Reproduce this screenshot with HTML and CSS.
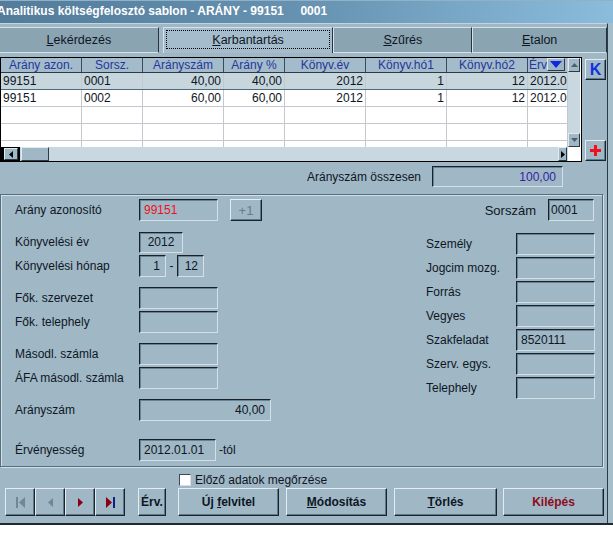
FILE: index.html
```html
<!DOCTYPE html>
<html lang="hu">
<head>
<meta charset="utf-8">
<title>Analitikus költségfelosztó sablon</title>
<link rel="stylesheet" href="styles.css">
</head>
<body>
<div class="window">
  <div class="titlebar">Analitikus költségfelosztó sablon - ARÁNY - 99151     0001</div>
  <div class="content">
    <div class="tabs">
      <div class="tab t1"><span><u>L</u>ekérdezés</span></div>
      <div class="tab t2 active"><span class="focus"><u>K</u>arbantartás</span></div>
      <div class="tab t3"><span><u>S</u>zűrés</span></div>
      <div class="tab t4"><span><u>E</u>talon</span></div>
    </div>

    <div class="gridzone">
      <div class="grid">
        <div class="gbody">
          <div class="gtable">
            <div class="grow ghead">
              <div>Arány azon.</div><div>Sorsz.</div><div>Arányszám</div><div>Arány %</div><div>Könyv.év</div><div>Könyv.hó1</div><div>Könyv.hó2</div>
              <div class="erv"><span>Érv</span><span class="dd"><svg width="12" height="7" viewBox="0 0 12 7"><path d="M0 0H12L6 7Z" fill="#1028e0"/></svg></span></div>
            </div>
            <div class="grow sel">
              <div>99151</div><div>0001</div><div class="r">40,00</div><div class="r">40,00</div><div class="r">2012</div><div class="r">1</div><div class="r">12</div><div>2012.01.01</div>
            </div>
            <div class="grow">
              <div>99151</div><div>0002</div><div class="r">60,00</div><div class="r">60,00</div><div class="r">2012</div><div class="r">1</div><div class="r">12</div><div>2012.01.01</div>
            </div>
            <div class="grow"><div></div><div></div><div></div><div></div><div></div><div></div><div></div><div></div></div>
            <div class="grow"><div></div><div></div><div></div><div></div><div></div><div></div><div></div><div></div></div>
            <div class="grow"><div></div><div></div><div></div><div></div><div></div><div></div><div></div><div></div></div>
          </div>
          <div class="vscroll">
            <div class="sbtn"><svg width="7" height="4" viewBox="0 0 7 4"><path d="M0 4H7L3.5 0Z" fill="#4a6070"/></svg></div>
            <div class="strack"></div>
            <div class="sbtn"><svg width="7" height="4" viewBox="0 0 7 4"><path d="M0 0H7L3.5 4Z" fill="#4a6070"/></svg></div>
          </div>
        </div>
        <div class="hscroll">
          <div class="hleft"><div class="sbtn hb"><svg width="4" height="7" viewBox="0 0 4 7"><path d="M4 0V7L0 3.5Z" fill="#000"/></svg></div></div>
          <div class="sbtn thumb"></div>
          <div class="htrack"></div>
          <div class="sbtn hright"><svg width="4" height="7" viewBox="0 0 4 7"><path d="M0 0V7L4 3.5Z" fill="#000"/></svg></div>
          <div class="corner"></div>
        </div>
      </div>
      <div class="sidebtns">
        <div class="btn sq k">K</div>
        <div class="btn sq"><svg width="11" height="11" viewBox="0 0 11 11"><path d="M4 0H7V4H11V7H7V11H4V7H0V4H4Z" fill="#f01020"/></svg></div>
      </div>
    </div>

    <div class="totalrow">
      <span class="tlabel">Arányszám összesen</span>
      <div class="fld total">100,00</div>
    </div>

    <div class="panel">
      <div class="lcol">
        <div class="frow">
          <span class="lbl">Arány azonosító</span>
          <div class="fld w79 red">99151</div>
          <div class="btn plus1">+1</div>
        </div>
        <div class="frow grp">
          <span class="lbl">Könyvelési év</span>
          <div class="fld w44 c">2012</div>
        </div>
        <div class="frow pair">
          <span class="lbl">Könyvelési hónap</span>
          <div class="fld w27 r">1</div>
          <span class="dash">-</span>
          <div class="fld w27 r">12</div>
        </div>
        <div class="frow grp">
          <span class="lbl">Fők. szervezet</span>
          <div class="fld w79"></div>
        </div>
        <div class="frow pair">
          <span class="lbl">Fők. telephely</span>
          <div class="fld w79"></div>
        </div>
        <div class="frow grp">
          <span class="lbl">Másodl. számla</span>
          <div class="fld w79"></div>
        </div>
        <div class="frow pair">
          <span class="lbl">ÁFA másodl. számla</span>
          <div class="fld w79"></div>
        </div>
        <div class="frow grp">
          <span class="lbl">Arányszám</span>
          <div class="fld w132 r">40,00</div>
        </div>
        <div class="frow grp2">
          <span class="lbl">Érvényesség</span>
          <div class="fld w77 clip">2012.01.01</div>
          <span class="suffix">-tól</span>
        </div>
      </div>
      <div class="rcol">
        <div class="frow sorsz">
          <span class="lbl13">Sorszám</span>
          <div class="fld w46">0001</div>
        </div>
        <div class="rlist">
          <div class="frow"><span class="rlbl">Személy</span><div class="fld w79"></div></div>
          <div class="frow"><span class="rlbl">Jogcim mozg.</span><div class="fld w79"></div></div>
          <div class="frow"><span class="rlbl">Forrás</span><div class="fld w79"></div></div>
          <div class="frow"><span class="rlbl">Vegyes</span><div class="fld w79"></div></div>
          <div class="frow"><span class="rlbl">Szakfeladat</span><div class="fld w79">8520111</div></div>
          <div class="frow"><span class="rlbl">Szerv. egys.</span><div class="fld w79"></div></div>
          <div class="frow"><span class="rlbl">Telephely</span><div class="fld w79"></div></div>
        </div>
      </div>
    </div>

    <div class="footer">
      <div class="checkrow"><span class="cbox"></span><span>Előző adatok megőrzése</span></div>
      <div class="btnrow">
        <div class="nav">
          <div class="btn nb"><svg width="9" height="11" viewBox="0 0 9 11"><rect x="0" y="0" width="2" height="11" fill="#6e8898"/><path d="M9 0V11L3 5.5Z" fill="#6e8898"/></svg></div>
          <div class="btn nb"><svg width="5" height="9" viewBox="0 0 5 9"><path d="M5 0V9L0 4.5Z" fill="#6e8898"/></svg></div>
          <div class="btn nb"><svg width="5" height="9" viewBox="0 0 5 9"><path d="M0 0V9L5 4.5Z" fill="#8a0010"/></svg></div>
          <div class="btn nb"><svg width="9" height="11" viewBox="0 0 9 11"><path d="M0 0V11L6 5.5Z" fill="#8a0010"/><rect x="7" y="0" width="2" height="11" fill="#102080"/></svg></div>
        </div>
        <div class="btn bb erv-btn">Érv.</div>
        <div class="btn bb wide"><span>Új <u>f</u>elvitel</span></div>
        <div class="btn bb wide"><span><u>M</u>ódosítás</span></div>
        <div class="btn bb wide w102"><span><u>T</u>örlés</span></div>
        <div class="btn bb wide exit">Kilépés</div>
      </div>
    </div>
  </div>
</div>
</body>
</html>
```

FILE: styles.css
```css
* { box-sizing: border-box; margin: 0; padding: 0; }
html, body { background: #ffffff; }
body {
  width: 613px;
  height: 535px;
  overflow: hidden;
  font-family: "Liberation Sans", Arial, sans-serif;
  font-size: 12px;
  color: #0e1624;
}
u { text-decoration: underline; text-underline-offset: 1px; }

.window {
  width: 613px;
  height: 525px;
  background: #a6bdca;
  border-bottom: 2px solid #1c2832;
  display: flex;
  flex-direction: column;
}

.titlebar {
  height: 23px;
  flex: none;
  background: linear-gradient(to right, #537c9b 0%, #6792b1 50%, #8bbcdc 100%);
  border-top: 1px solid #8fb2c8;
  color: #ffffff;
  font-weight: bold;
  font-size: 12px;
  line-height: 21px;
  white-space: pre;
  text-indent: -3px;
  overflow: hidden;
}

.content {
  width: 608px;
  flex: 1;
  background: #a0b8c6;
  border-right: 1px solid #2a3a46;
  border-top: 1px solid #c2d4de;
  padding-top: 3px;
  display: flex;
  flex-direction: column;
}

/* tabs */
.tabs {
  display: flex;
  height: 26px;
  flex: none;
}
.tab {
  height: 26px;
  background: #8ba4b2;
  border-top: 1px solid #d6e2e9;
  border-left: 1px solid #d6e2e9;
  border-right: 1px solid #25343f;
  border-bottom: 1px solid #d6e2e9;
  display: flex;
  align-items: center;
  justify-content: center;
  font-size: 12.5px;
}
.t1 { width: 159px; border-left: none; margin-right: 4px; }
.t2 { width: 171px; }
.t3 { width: 139px; }
.t4 { width: 135px; border-right: 1px solid #25343f; }
.tab.active {
  background: #a4bccb;
  border-bottom: none;
  padding: 2px 2px 4px 2px;
}
.focus {
  flex: 1;
  align-self: stretch;
  border: 1px dotted #000;
  display: flex;
  align-items: center;
  justify-content: center;
}

/* grid */
.gridzone {
  display: flex;
  margin-top: 4px;
  flex: none;
}
.grid {
  width: 582px;
  height: 105px;
  border: 1px solid #000;
  display: flex;
  flex-direction: column;
  background: #ffffff;
}
.gbody {
  display: flex;
  height: 89px;
}
.gtable {
  width: 566px;
  overflow: hidden;
  background: #ffffff;
}
.grow {
  display: grid;
  grid-template-columns: 81px 61px 81px 61px 81px 81px 81px 39px;
  height: 17px;
  border-bottom: 1px solid #c4c8cc;
}
.grow > div {
  border-right: 1px solid #c4c8cc;
  padding: 0 2px;
  line-height: 16px;
  white-space: nowrap;
  overflow: hidden;
}
.grow > div.r { text-align: right; }
.grow > div:last-child { border-right: none; }
.ghead {
  height: 15px;
  background: #a3bbca;
  border-bottom: 1px solid #2a3a46;
}
.ghead > div {
  color: #26369c;
  text-align: center;
  line-height: 14px;
  border-right: 1px solid #3a4c58;
}
.ghead > div.erv {
  display: flex;
  text-align: left;
  padding: 0 0 0 1px;
  overflow: hidden;
}
.dd {
  width: 18px;
  height: 13px;
  margin-left: 0px;
  flex: none;
  background: #9db5c4;
  border: 1px solid;
  border-color: #dce6ec #2a3a46 #2a3a46 #dce6ec;
  display: flex;
  align-items: center;
  justify-content: center;
}
.grow.sel {
  background: #c7d5dd;
  border-bottom: 1px solid #4c6a7e;
}

.vscroll {
  width: 13px;
  display: flex;
  flex-direction: column;
  background: #c9d8e0;
  border-left: 1px solid #c4c8cc;
}
.sbtn {
  background: #a0b8c6;
  border: 1px solid;
  border-color: #e0eaf0 #2a3a46 #2a3a46 #e0eaf0;
  display: flex;
  align-items: center;
  justify-content: center;
}
.vscroll .sbtn { height: 14px; }
.strack { flex: 1; }

.hscroll {
  height: 14px;
  display: flex;
  background: #c9d8e0;
}
.hleft {
  width: 19px;
  background: #000;
  padding: 1px 2px 1px 3px;
  display: flex;
}
.hb { flex: 1; }
.thumb { width: 28px; margin-left: 1px; }
.htrack { flex: 1; }
.hright { width: 9px; margin-right: 1px; }
.corner { width: 13px; background: #ffffff; }

.sidebtns {
  width: 21px;
  margin-left: 3px;
  padding: 2px 0 1px;
  display: flex;
  flex-direction: column;
  justify-content: space-between;
}

.btn {
  background: #a0b8c6;
  border: 1px solid;
  border-color: #e2ecf2 #18242e #18242e #e2ecf2;
  box-shadow: inset -1px -1px 0 #5f7887;
  display: flex;
  align-items: center;
  justify-content: center;
}
.sq { width: 21px; height: 21px; }
.k {
  color: #1030e0;
  font-weight: bold;
  font-size: 16px;
}

/* total */
.totalrow {
  display: flex;
  align-items: center;
  justify-content: flex-end;
  margin-top: 4px;
  padding-right: 44px;
  flex: none;
}
.tlabel { margin-right: 11px; }
.fld {
  height: 22px;
  border: 1px solid;
  border-color: #17222b #d4e0e8 #d4e0e8 #17222b;
  box-shadow: inset 1px 1px 0 #6a8392;
  padding: 0 4px;
  display: flex;
  align-items: center;
  white-space: nowrap;
  overflow: hidden;
  flex: none;
}
.fld.total {
  width: 131px;
  height: 21px;
  justify-content: flex-end;
  padding-right: 6px;
  color: #3424a4;
}

/* panel */
.panel {
  margin-top: 7px;
  width: 603px;
  height: 273px;
  border: 1px solid #54707f;
  box-shadow: inset 1px 1px 0 #d4e0e8, 1px 1px 0 #d4e0e8;
  display: flex;
  padding: 4px 0 0 14px;
  flex: none;
}
.lcol {
  width: 411px;
  display: flex;
  flex-direction: column;
}
.frow {
  display: flex;
  align-items: center;
  height: 22px;
  flex: none;
}
.frow.grp { margin-top: 10px; }
.frow.pair { margin-top: 2px; }
.frow.grp2 { margin-top: 18px; }
.lbl { width: 124px; flex: none; }
.w79 { width: 79px; }
.w44 { width: 44px; height: 21px; }
.w27 { width: 27px; }
.w132 { width: 132px; }
.w77 { width: 77px; }
.w46 { width: 46px; padding: 0 2px; }
.fld.r { justify-content: flex-end; padding-right: 5px; }
.fld.c { justify-content: center; }
.fld.red { color: #ee1020; }
.fld.clip { padding-left: 4px; }
.dash { width: 11px; text-align: center; }
.suffix { margin-left: 3px; }
.plus1 {
  width: 32px;
  height: 22px;
  margin-left: 12px;
  color: #667e8c;
  font-size: 13px;
}

.rcol {
  flex: 1;
  display: flex;
  flex-direction: column;
}
.sorsz {
  justify-content: flex-end;
  padding-right: 8px;
}
.lbl13 { font-size: 13px; margin-right: 12px; }
.rlist {
  margin-top: 12px;
  display: flex;
  flex-direction: column;
  gap: 2px;
}
.rlbl { width: 90px; flex: none; }

/* footer */
.footer {
  display: flex;
  flex-direction: column;
  padding-top: 6px;
}
.checkrow {
  display: flex;
  align-items: center;
  height: 13px;
  margin-left: 179px;
}
.cbox {
  width: 12px;
  height: 12px;
  background: #ffffff;
  border: 1px solid;
  border-color: #3a4a56 #d4e0e8 #d4e0e8 #3a4a56;
  margin-right: 4px;
}
.btnrow {
  display: flex;
  margin-top: 2px;
  height: 28px;
  padding-left: 5px;
}
.nav { display: flex; }
.nb { width: 30px; height: 28px; }
.bb {
  height: 28px;
  font-weight: bold;
  font-size: 12px;
}
.erv-btn { width: 28px; margin-left: 13px; }
.wide { width: 101px; margin-left: 7px; }
.erv-btn + .wide { margin-left: 12px; }
.w102 { width: 103px; }
.exit { color: #8c0c1c; margin-left: 6px; }
```
